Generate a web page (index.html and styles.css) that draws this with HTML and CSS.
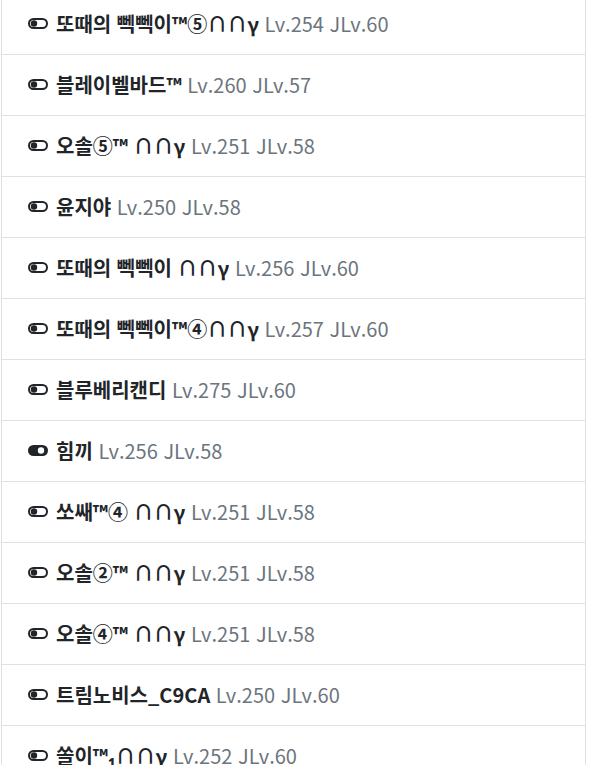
FILE: index.html
```html
<!DOCTYPE html>
<html lang="ko">
<head>
    <meta charset="UTF-8">
    <meta name="viewport" content="width=device-width, initial-scale=1.0">
    <title>캐릭터 목록</title>
    <link rel="stylesheet" href="styles.css">
</head>
<body>
    <ul class="list-group">
        <li class="list-item">
            <svg class="toggle" viewBox="0 0 20 11"><rect class="pill" x="1" y="1" width="18" height="9" rx="4.5"/><circle cx="6" cy="5.5" r="3.2"/></svg>
            <span class="label"><b class="name">또때의 뻭뻭이™⑤∩∩γ</b> <span class="level">Lv.254 JLv.60</span></span>
        </li>
        <li class="list-item">
            <svg class="toggle" viewBox="0 0 20 11"><rect class="pill" x="1" y="1" width="18" height="9" rx="4.5"/><circle cx="6" cy="5.5" r="3.2"/></svg>
            <span class="label"><b class="name">블레이벨바드™</b> <span class="level">Lv.260 JLv.57</span></span>
        </li>
        <li class="list-item">
            <svg class="toggle" viewBox="0 0 20 11"><rect class="pill" x="1" y="1" width="18" height="9" rx="4.5"/><circle cx="6" cy="5.5" r="3.2"/></svg>
            <span class="label"><b class="name">오솔⑤™ ∩∩γ</b> <span class="level">Lv.251 JLv.58</span></span>
        </li>
        <li class="list-item">
            <svg class="toggle" viewBox="0 0 20 11"><rect class="pill" x="1" y="1" width="18" height="9" rx="4.5"/><circle cx="6" cy="5.5" r="3.2"/></svg>
            <span class="label"><b class="name">윤지야</b> <span class="level">Lv.250 JLv.58</span></span>
        </li>
        <li class="list-item">
            <svg class="toggle" viewBox="0 0 20 11"><rect class="pill" x="1" y="1" width="18" height="9" rx="4.5"/><circle cx="6" cy="5.5" r="3.2"/></svg>
            <span class="label"><b class="name">또때의 뻭뻭이 ∩∩γ</b> <span class="level">Lv.256 JLv.60</span></span>
        </li>
        <li class="list-item">
            <svg class="toggle" viewBox="0 0 20 11"><rect class="pill" x="1" y="1" width="18" height="9" rx="4.5"/><circle cx="6" cy="5.5" r="3.2"/></svg>
            <span class="label"><b class="name">또때의 뻭뻭이™④∩∩γ</b> <span class="level">Lv.257 JLv.60</span></span>
        </li>
        <li class="list-item">
            <svg class="toggle" viewBox="0 0 20 11"><rect class="pill" x="1" y="1" width="18" height="9" rx="4.5"/><circle cx="6" cy="5.5" r="3.2"/></svg>
            <span class="label"><b class="name">블루베리캔디</b> <span class="level">Lv.275 JLv.60</span></span>
        </li>
        <li class="list-item">
            <svg class="toggle on" viewBox="0 0 20 11"><rect x="0" y="0" width="20" height="11" rx="5.5"/><circle class="knob" cx="13" cy="5.5" r="3.2"/></svg>
            <span class="label"><b class="name">힘끼</b> <span class="level">Lv.256 JLv.58</span></span>
        </li>
        <li class="list-item">
            <svg class="toggle" viewBox="0 0 20 11"><rect class="pill" x="1" y="1" width="18" height="9" rx="4.5"/><circle cx="6" cy="5.5" r="3.2"/></svg>
            <span class="label"><b class="name">쏘쌔™④ ∩∩γ</b> <span class="level">Lv.251 JLv.58</span></span>
        </li>
        <li class="list-item">
            <svg class="toggle" viewBox="0 0 20 11"><rect class="pill" x="1" y="1" width="18" height="9" rx="4.5"/><circle cx="6" cy="5.5" r="3.2"/></svg>
            <span class="label"><b class="name">오솔②™ ∩∩γ</b> <span class="level">Lv.251 JLv.58</span></span>
        </li>
        <li class="list-item">
            <svg class="toggle" viewBox="0 0 20 11"><rect class="pill" x="1" y="1" width="18" height="9" rx="4.5"/><circle cx="6" cy="5.5" r="3.2"/></svg>
            <span class="label"><b class="name">오솔④™ ∩∩γ</b> <span class="level">Lv.251 JLv.58</span></span>
        </li>
        <li class="list-item">
            <svg class="toggle" viewBox="0 0 20 11"><rect class="pill" x="1" y="1" width="18" height="9" rx="4.5"/><circle cx="6" cy="5.5" r="3.2"/></svg>
            <span class="label"><b class="name">트림노비스_C9CA</b> <span class="level">Lv.250 JLv.60</span></span>
        </li>
        <li class="list-item">
            <svg class="toggle" viewBox="0 0 20 11"><rect class="pill" x="1" y="1" width="18" height="9" rx="4.5"/><circle cx="6" cy="5.5" r="3.2"/></svg>
            <span class="label"><b class="name">쏠이™₁∩∩γ</b> <span class="level">Lv.252 JLv.60</span></span>
        </li>
    </ul>
</body>
</html>
```

FILE: styles.css
```css
body {
    margin: 0;
    padding: 0;
    background-color: #fff;
    font-family: 'Noto Sans CJK KR', 'Noto Sans', sans-serif;
    color: #212529;
}

.list-group {
    list-style: none;
    margin: -7px 0 0 1px;
    padding: 0;
    width: 583px;
    border: 1px solid #dee2e6;
    border-top: none;
}

.list-item {
    box-sizing: border-box;
    display: flex;
    align-items: center;
    height: 61px;
    padding: 0 0 2px 26px;
    border-top: 1px solid #dee2e6;
    font-size: 20px;
    white-space: nowrap;
}

.toggle {
    width: 20px;
    height: 11px;
    margin-right: 8px;
    flex-shrink: 0;
    fill: #212529;
}

.toggle .pill {
    fill: none;
    stroke: #212529;
    stroke-width: 2;
}

.toggle .knob {
    fill: #fff;
}

.name {
    font-weight: 700;
}

.level {
    color: #6c757d;
}
```
